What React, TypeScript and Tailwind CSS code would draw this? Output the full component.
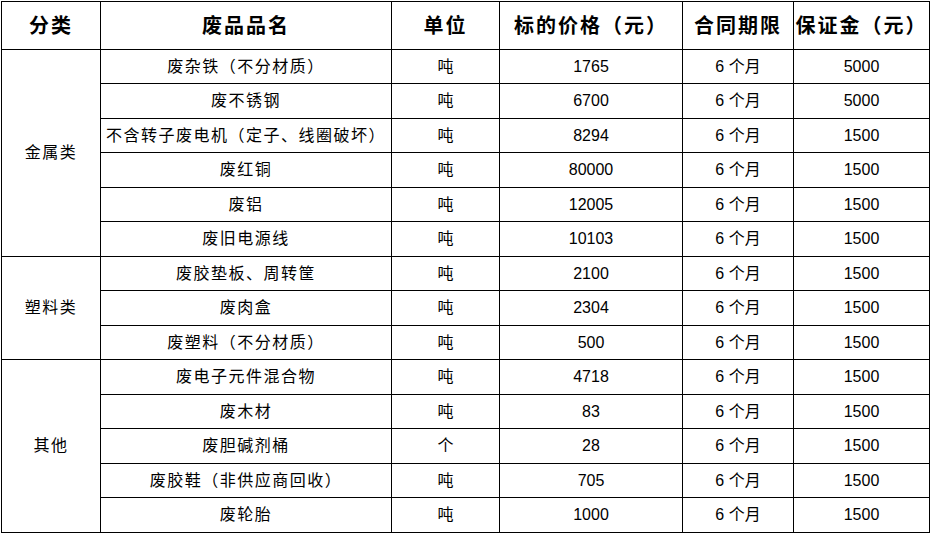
import React from 'react';

type Row = { cat?: string; span?: number; name: string; unit: string; price: string; term: string; deposit: string };

const rows: Row[] = [
  { cat: '金属类', span: 6, name: '废杂铁（不分材质）', unit: '吨', price: '1765', term: '6', deposit: '5000' },
  { name: '废不锈钢', unit: '吨', price: '6700', term: '6', deposit: '5000' },
  { name: '不含转子废电机（定子、线圈破坏）', unit: '吨', price: '8294', term: '6', deposit: '1500' },
  { name: '废红铜', unit: '吨', price: '80000', term: '6', deposit: '1500' },
  { name: '废铝', unit: '吨', price: '12005', term: '6', deposit: '1500' },
  { name: '废旧电源线', unit: '吨', price: '10103', term: '6', deposit: '1500' },
  { cat: '塑料类', span: 3, name: '废胶垫板、周转筐', unit: '吨', price: '2100', term: '6', deposit: '1500' },
  { name: '废肉盒', unit: '吨', price: '2304', term: '6', deposit: '1500' },
  { name: '废塑料（不分材质）', unit: '吨', price: '500', term: '6', deposit: '1500' },
  { cat: '其他', span: 5, name: '废电子元件混合物', unit: '吨', price: '4718', term: '6', deposit: '1500' },
  { name: '废木材', unit: '吨', price: '83', term: '6', deposit: '1500' },
  { name: '废胆碱剂桶', unit: '个', price: '28', term: '6', deposit: '1500' },
  { name: '废胶鞋（非供应商回收）', unit: '吨', price: '705', term: '6', deposit: '1500' },
  { name: '废轮胎', unit: '吨', price: '1000', term: '6', deposit: '1500' },
];

const heights = ['h-[34px]', 'h-[35px]'];

const cjk = { fontFamily: '"Liberation Sans", "Noto Sans CJK SC", sans-serif' };

export default function App() {
  return (
    <div className="w-[933px] h-[537px] bg-white pl-px pt-px" style={cjk}>
      <table className="w-[928px] border-collapse table-fixed text-black">
        <colgroup>
          <col className="w-[99px]" />
          <col className="w-[291px]" />
          <col className="w-[108px]" />
          <col className="w-[183px]" />
          <col className="w-[111px]" />
          <col className="w-[136px]" />
        </colgroup>
        <thead>
          <tr className="h-[48px]">
            {['分类', '废品品名', '单位', '标的价格（元）', '合同期限', '保证金（元）'].map((h) => (
              <th key={h} className="border border-black text-center align-middle text-[20px] font-bold tracking-[2px] p-0 leading-none whitespace-nowrap overflow-hidden">
                {h}
              </th>
            ))}
          </tr>
        </thead>
        <tbody>
          {rows.map((r, i) => (
            <tr key={r.name} className={heights[i % 2]}>
              {r.cat && (
                <td rowSpan={r.span} className="border border-black text-center align-middle text-[16px] tracking-[1.5px] p-0">
                  {r.cat}
                </td>
              )}
              <td className="border border-black text-center align-middle text-[16px] tracking-[1.5px] p-0 whitespace-nowrap">{r.name}</td>
              <td className="border border-black text-center align-middle text-[16px] p-0">{r.unit}</td>
              <td className="border border-black text-center align-middle text-[16px] p-0">{r.price}</td>
              <td className="border border-black text-center align-middle text-[16px] p-0">
                {r.term} 个月
              </td>
              <td className="border border-black text-center align-middle text-[16px] p-0">{r.deposit}</td>
            </tr>
          ))}
        </tbody>
      </table>
    </div>
  );
}
